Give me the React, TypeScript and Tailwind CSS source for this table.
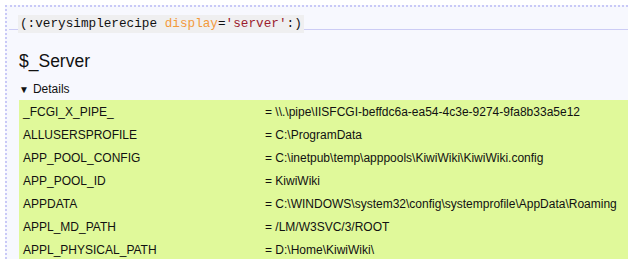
const rows: [string, string][] = [
  ["_FCGI_X_PIPE_", "\\\\.\\pipe\\IISFCGI-beffdc6a-ea54-4c3e-9274-9fa8b33a5e12"],
  ["ALLUSERSPROFILE", "C:\\ProgramData"],
  ["APP_POOL_CONFIG", "C:\\inetpub\\temp\\apppools\\KiwiWiki\\KiwiWiki.config"],
  ["APP_POOL_ID", "KiwiWiki"],
  ["APPDATA", "C:\\WINDOWS\\system32\\config\\systemprofile\\AppData\\Roaming"],
  ["APPL_MD_PATH", "/LM/W3SVC/3/ROOT"],
  ["APPL_PHYSICAL_PATH", "D:\\Home\\KiwiWiki\\"],
];

export default function App() {
  return (
    <div className="h-[259px] w-[628px] overflow-hidden bg-white pl-[5px] pt-[5px] font-['Liberation_Sans',Arial,sans-serif] text-[#111]">
      <div className="h-full border-l-2 border-t-2 border-dotted border-[#c9c9f7] bg-[#f7f8fe]">
        {/* recipe markup line */}
        <div className="ml-[2px] h-[23px] border-b border-[#ccccf5] pl-[9px] pt-[3px]">
          <code className="inline-block h-[18px] bg-[#efeff0] px-[2px] font-['Liberation_Mono',monospace] text-[12.7px] leading-[18px] text-[#111]">
            (:verysimplerecipe <span className="text-[#f39a3c]">display</span>=
            <span className="text-[#9b1c2e]">'server'</span>:)
          </code>
        </div>

        <div className="pl-[12px]">
          <h2 className="mt-[20px] text-[17.5px] leading-[22px] text-[#111]">$_Server</h2>
          <div className="mt-[10px] flex items-center text-[12px] leading-[15px]">
            <span className="mr-[4px] text-[10px]">▼</span>
            Details
          </div>
          <table className="mt-[3px] w-full border-collapse bg-[#e0f99a] text-[12px]">
            <tbody>
              {rows.map(([k, v]) => (
                <tr key={k} className="h-[23px]">
                  <td className="w-[246px] pl-[4px] align-middle">{k}</td>
                  <td className="align-middle">= {v}</td>
                </tr>
              ))}
            </tbody>
          </table>
        </div>
      </div>
    </div>
  );
}
